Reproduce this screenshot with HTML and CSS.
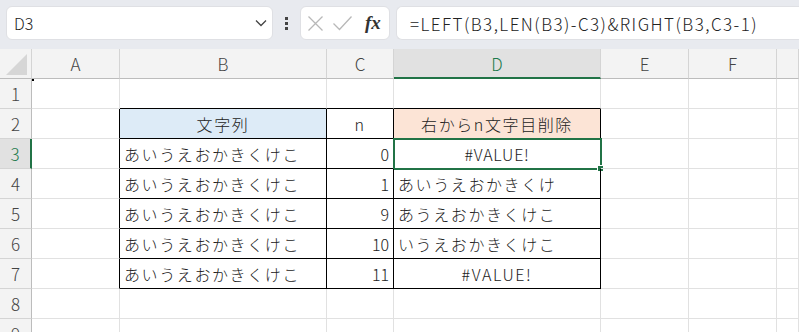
FILE: index.html
```html
<!DOCTYPE html>
<html lang="ja">
<head>
    <meta charset="UTF-8">
    <title>Excel</title>
    <link rel="stylesheet" href="styles.css">
</head>
<body>
    <div class="toolbar">
        <div class="namebox">
            <span>D3</span>
            <svg width="12" height="8" viewBox="0 0 12 8"><path d="M1 1.5 L6 6.5 L11 1.5" fill="none" stroke="#444" stroke-width="1.3"/></svg>
        </div>
        <div class="dots"><i></i><i></i><i></i></div>
        <div class="fnbox">
            <svg width="17" height="17" viewBox="0 0 17 17"><path d="M1.5 1.5 L15.5 15.5 M15.5 1.5 L1.5 15.5" stroke="#b8b8b8" stroke-width="1.3"/></svg>
            <svg width="21" height="18" viewBox="0 0 21 18"><path d="M1.5 9.5 L7.5 15.5 L19.5 2.5" fill="none" stroke="#b8b8b8" stroke-width="1.3"/></svg>
            <span class="fx">fx</span>
        </div>
        <div class="formula">=LEFT(B3,LEN(B3)-C3)&amp;RIGHT(B3,C3-1)</div>
    </div>

    <div class="sheet">
        <div class="hd corner"><div class="tri"></div></div>
        <div class="hd">A</div>
        <div class="hd">B</div>
        <div class="hd">C</div>
        <div class="hd sel">D</div>
        <div class="hd">E</div>
        <div class="hd">F</div>
        <div class="hd"></div>

        <div class="rh">1</div>
        <div class="c dot"></div><div class="c tb"></div><div class="c tb"></div><div class="c tb"></div><div class="c"></div><div class="c"></div><div class="c"></div>

        <div class="rh">2</div>
        <div class="c lb"></div>
        <div class="c t blue ctr">文字列</div>
        <div class="c t ctr">n</div>
        <div class="c t peach ctr">右からn文字目削除</div>
        <div class="c"></div><div class="c"></div><div class="c"></div>

        <div class="rh sel">3</div>
        <div class="c lb"></div>
        <div class="c t">あいうえおかきくけこ</div>
        <div class="c t num">0</div>
        <div class="c t ctr active">#VALUE!</div>
        <div class="c"></div><div class="c"></div><div class="c"></div>

        <div class="rh">4</div>
        <div class="c lb"></div>
        <div class="c t">あいうえおかきくけこ</div>
        <div class="c t num">1</div>
        <div class="c t">あいうえおかきくけ</div>
        <div class="c"></div><div class="c"></div><div class="c"></div>

        <div class="rh">5</div>
        <div class="c lb"></div>
        <div class="c t">あいうえおかきくけこ</div>
        <div class="c t num">9</div>
        <div class="c t">あうえおかきくけこ</div>
        <div class="c"></div><div class="c"></div><div class="c"></div>

        <div class="rh">6</div>
        <div class="c lb"></div>
        <div class="c t">あいうえおかきくけこ</div>
        <div class="c t num">10</div>
        <div class="c t">いうえおかきくけこ</div>
        <div class="c"></div><div class="c"></div><div class="c"></div>

        <div class="rh">7</div>
        <div class="c lb"></div>
        <div class="c t">あいうえおかきくけこ</div>
        <div class="c t num">11</div>
        <div class="c t ctr">#VALUE!</div>
        <div class="c"></div><div class="c"></div><div class="c"></div>

        <div class="rh">8</div>
        <div class="c"></div><div class="c"></div><div class="c"></div><div class="c"></div><div class="c"></div><div class="c"></div><div class="c"></div>

        <div class="rh">9</div>
        <div class="c"></div><div class="c"></div><div class="c"></div><div class="c"></div><div class="c"></div><div class="c"></div><div class="c"></div>
    </div>
</body>
</html>
```

FILE: styles.css
```css
body {
    margin: 0;
    font-family: 'Noto Sans CJK JP', 'Noto Sans', sans-serif;
    font-weight: 300;
    background-color: #fff;
    overflow: hidden;
    height: 332px;
}
.toolbar {
    height: 49px;
    background-color: #e8eaef;
    display: flex;
    align-items: flex-start;
    padding: 6px 0 0 6px;
    box-sizing: border-box;
}
.namebox, .fnbox, .formula {
    height: 34px;
    background: #fff;
    border: 1px solid #dfe0e4;
    border-radius: 6px;
    box-sizing: border-box;
    display: flex;
    align-items: center;
}
.namebox {
    width: 267px;
    padding: 0 5px 0 7px;
    justify-content: space-between;
    font-size: 16px;
    color: #222;
}
.dots {
    width: 27px;
    height: 34px;
    display: flex;
    flex-direction: column;
    align-items: center;
    justify-content: center;
    gap: 2px;
}
.dots i {
    width: 3px;
    height: 3px;
    background: #444;
}
.fnbox {
    width: 90px;
    padding: 0 6px 0 6px;
    gap: 8px;
}
.fx {
    font-family: 'Liberation Serif', serif;
    font-style: italic;
    font-weight: bold;
    font-size: 19px;
    color: #333;
    margin-left: 4px;
}
.formula {
    flex: 1;
    margin-left: 6px;
    border-right: none;
    border-radius: 6px 0 0 6px;
    padding-left: 13px;
    font-size: 17px;
    color: #222;
    letter-spacing: 1.45px;
}
.sheet {
    display: grid;
    grid-template-columns: 32px 88px 207px 67px 207px 88px 88px 1fr;
    grid-auto-rows: 30px;
}
.hd, .rh {
    background: #f3f3f3;
    border-right: 1px solid #d4d4d4;
    border-bottom: 1px solid #bcbcbc;
    display: flex;
    align-items: center;
    justify-content: center;
    font-size: 17px;
    color: #444;
}
.rh {
    border-bottom: 1px solid #d4d4d4;
    border-right: 1px solid #bcbcbc;
}
.hd.sel {
    background: #e1e1e1;
    color: #1d7a4c;
    border-bottom: 2px solid #217346;
}
.rh.sel {
    background: #e1e1e1;
    color: #1d7a4c;
    border-right: 2px solid #217346;
}
.corner {
    position: relative;
}
.tri {
    position: absolute;
    right: 4px;
    bottom: 3px;
    width: 0;
    height: 0;
    border-left: 21px solid transparent;
    border-bottom: 21px solid #d6d6d6;
}
.c {
    border-right: 1px solid #e1e1e1;
    border-bottom: 1px solid #e1e1e1;
    display: flex;
    align-items: center;
    padding: 0 4px;
    font-size: 16px;
    color: #222;
    letter-spacing: 1.6px;
    white-space: nowrap;
    position: relative;
}
.dot::before {
    content: '';
    position: absolute;
    left: 0;
    top: 0;
    width: 2px;
    height: 2px;
    background: #000;
}
.c.t {
    border-right-color: #000;
    border-bottom-color: #000;
}
.c.tb {
    border-bottom-color: #000;
}
.c.lb {
    border-right-color: #000;
}
.ctr {
    justify-content: center;
}
.num {
    justify-content: flex-end;
    letter-spacing: 0;
}
.blue {
    background: #ddebf7;
}
.peach {
    background: #fce4d6;
}
.active {
    outline: 2px solid #217346;
    outline-offset: -1px;
    letter-spacing: 0.8px;
}
.active::after {
    content: '';
    position: absolute;
    right: -4px;
    bottom: -4px;
    width: 5px;
    height: 5px;
    background: #217346;
    border: 1px solid #fff;
}
```
